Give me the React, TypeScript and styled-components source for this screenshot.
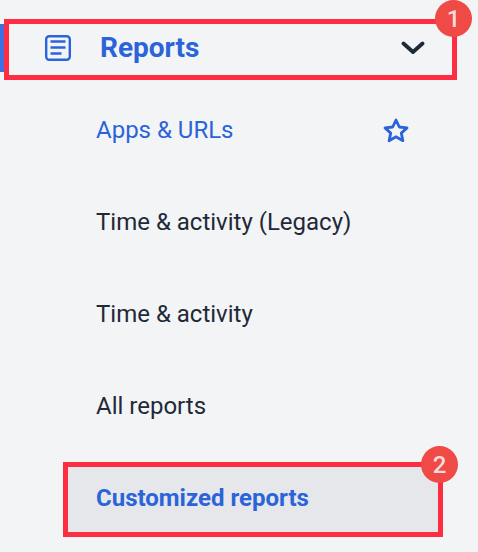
import React from "react";
import styled, { createGlobalStyle } from "styled-components";

const Global = createGlobalStyle`
  html, body { margin: 0; padding: 0; background: #f3f4f6; }
  body { font-family: Roboto, "Liberation Sans", sans-serif; -webkit-font-smoothing: antialiased; }
`;

const Page = styled.div`
  width: 478px;
  height: 552px;
  overflow: hidden;
  background: #f3f4f6;
  padding-top: 19px;
  box-sizing: border-box;
  display: flex;
  flex-direction: column;
`;

const Header = styled.div`
  position: relative;
  box-sizing: border-box;
  margin-left: 4px;
  width: 453px;
  height: 61px;
  border: 5px solid #ff2d42;
  display: flex;
  align-items: center;
  padding: 0 27px 3px 36px;
  color: #2b64d9;
`;

const ActiveBar = styled.span`
  position: absolute;
  left: -9px;
  top: 0;
  width: 4px;
  height: 48px;
  background: #3f6fe0;
`;

const HeaderLabel = styled.span`
  margin-left: 29px;
  font-size: 28px;
  font-weight: 700;
  line-height: 32px;
  flex: 1;
`;

const List = styled.div`
  display: flex;
  flex-direction: column;
  margin-top: 4px;
`;

const Item = styled.div<{ $active?: boolean }>`
  height: 92px;
  padding: 0 69px 0 96px;
  display: flex;
  align-items: center;
  justify-content: space-between;
  font-size: 24px;
  color: ${(p) => (p.$active ? "#2b64d9" : "#1f2937")};
`;

const Highlight = styled.div`
  position: relative;
  box-sizing: border-box;
  margin: 10px 0 0 63px;
  width: 380px;
  height: 75px;
  border: 5px solid #ff2d42;
  background: #e5e7eb;
  padding: 0 0 3px 28px;
  display: flex;
  align-items: center;
  font-size: 24px;
  font-weight: 700;
  color: #2b64d9;
`;

const Badge = styled.span<{ $top: number; $right: number }>`
  position: absolute;
  top: ${(p) => p.$top}px;
  right: ${(p) => p.$right}px;
  width: 37px;
  height: 37px;
  border-radius: 50%;
  background: #ef4a45;
  color: #f6dcdc;
  font-size: 24px;
  font-weight: 500;
  display: flex;
  align-items: center;
  justify-content: center;
`;

export default function App() {
  return (
    <>
      <Global />
      <Page>
        <Header>
          <ActiveBar />
          <svg width="26" height="26" viewBox="0 0 26 26" fill="none" stroke="currentColor" strokeWidth="2.4" strokeLinejoin="round">
            <rect x="1.2" y="1.2" width="23.6" height="23.6" rx="3" />
            <path d="M5.5 6.5h15M5.5 12.5h15M5.5 18.5h11" />
          </svg>
          <HeaderLabel>Reports</HeaderLabel>
          <svg width="24" height="14" viewBox="0 0 24 14" fill="none" stroke="#1f2937" strokeWidth="3.8" strokeLinecap="round" strokeLinejoin="round">
            <path d="M2.5 2.5L12 11l9.5-8.5" />
          </svg>
          <Badge $top={-24} $right={-20}>1</Badge>
        </Header>
        <List>
          <Item $active>
            Apps &amp; URLs
            <svg width="26" height="25" viewBox="0 0 26 25" fill="none" stroke="#2b64d9" strokeWidth="2.8" strokeLinejoin="round">
              <path d="M13 2l3.3 7 7.7.9-5.7 5.2 1.6 7.6-6.9-3.9-6.9 3.9 1.6-7.6L2 9.9 9.7 9z" />
            </svg>
          </Item>
          <Item>Time &amp; activity (Legacy)</Item>
          <Item>Time &amp; activity</Item>
          <Item>All reports</Item>
        </List>
        <Highlight>
          Customized reports
          <Badge $top={-21} $right={-20}>2</Badge>
        </Highlight>
      </Page>
    </>
  );
}
